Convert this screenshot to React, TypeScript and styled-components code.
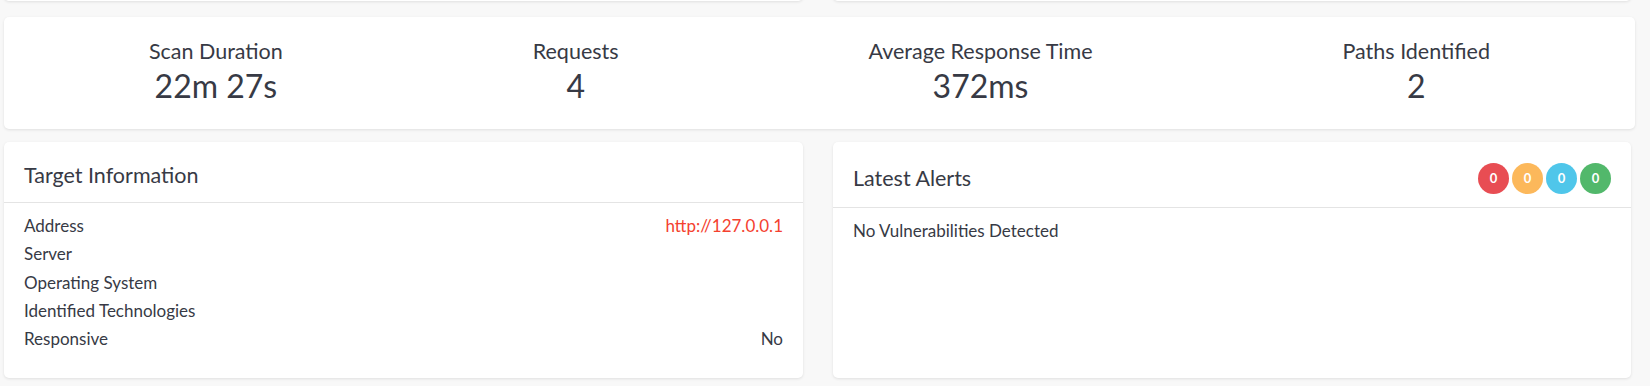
import styled, { createGlobalStyle } from 'styled-components';

const GlobalStyle = createGlobalStyle`
  html, body {
    margin: 0;
    padding: 0;
    background: #f8f8f8;
    font-family: Lato, 'Noto Sans', sans-serif;
    color: #373a45;
  }
`;

const Page = styled.div`
  display: flow-root;
  width: 1650px;
  padding: 0 15px 8px 4px;
  box-sizing: border-box;
`;

const Card = styled.div`
  background: #fff;
  border-radius: 5px;
  box-shadow: 0 1px 3px rgba(0, 0, 0, 0.1);
`;

const TwoColumns = styled.div`
  display: grid;
  grid-template-columns: 799px 798px;
  column-gap: 30px;
`;

const HiddenRow = styled(TwoColumns)`
  margin-top: -39px;
  height: 40px;
`;

const StatsCard = styled(Card)`
  margin-top: 16px;
  width: 1631px;
  height: 112px;
  box-sizing: border-box;
  padding: 22px 20px 0;
  display: flex;
  justify-content: space-around;
`;

const Stat = styled.div`
  display: flex;
  flex-direction: column;
  align-items: center;
`;

const StatLabel = styled.div`
  font-size: 21.5px;
  line-height: 25px;
`;

const StatValue = styled.div`
  margin-top: 3px;
  font-size: 32px;
  line-height: 38px;
`;

const PanelRow = styled(TwoColumns)`
  margin-top: 13px;
  height: 236px;
`;

const PanelHeader = styled.div<{ $tall?: boolean }>`
  display: flex;
  align-items: center;
  justify-content: space-between;
  padding: 21px 20px 14px;
  height: ${p => (p.$tall ? '30px' : '25px')};
  border-bottom: 1px solid #e4e4e4;
`;

const PanelTitle = styled.h3`
  margin: 0;
  font-size: 21.5px;
  font-weight: 400;
  line-height: 25px;
`;

const PanelBody = styled.div`
  padding: 9px 20px;
  font-size: 17px;
  line-height: 28.25px;
`;

const InfoRow = styled.div`
  display: flex;
  justify-content: space-between;
`;

const InfoValue = styled.span<{ $link?: boolean }>`
  color: ${p => (p.$link ? '#f4412f' : 'inherit')};
`;

const Badges = styled.div`
  display: flex;
  gap: 3px;
`;

const Badge = styled.span<{ $color: string }>`
  width: 31px;
  height: 31px;
  border-radius: 50%;
  background: ${p => p.$color};
  color: #fff;
  font-size: 13px;
  font-weight: 700;
  display: flex;
  align-items: center;
  justify-content: center;
`;

const stats = [
  { label: 'Scan Duration', value: '22m 27s' },
  { label: 'Requests', value: '4' },
  { label: 'Average Response Time', value: '372ms' },
  { label: 'Paths Identified', value: '2' },
];

const targetInfo: { label: string; value?: string; link?: boolean }[] = [
  { label: 'Address', value: 'http://127.0.0.1', link: true },
  { label: 'Server' },
  { label: 'Operating System' },
  { label: 'Identified Technologies' },
  { label: 'Responsive', value: 'No' },
];

const severities = ['#e84d53', '#fcb85b', '#4fc6ea', '#52b86b'];

export default function App() {
  return (
    <>
      <GlobalStyle />
      <Page>
        <HiddenRow>
          <Card />
          <Card />
        </HiddenRow>

        <StatsCard>
          {stats.map(s => (
            <Stat key={s.label}>
              <StatLabel>{s.label}</StatLabel>
              <StatValue>{s.value}</StatValue>
            </Stat>
          ))}
        </StatsCard>

        <PanelRow>
          <Card>
            <PanelHeader>
              <PanelTitle>Target Information</PanelTitle>
            </PanelHeader>
            <PanelBody>
              {targetInfo.map(row => (
                <InfoRow key={row.label}>
                  <span>{row.label}</span>
                  <InfoValue $link={row.link}>{row.value}</InfoValue>
                </InfoRow>
              ))}
            </PanelBody>
          </Card>

          <Card>
            <PanelHeader $tall>
              <PanelTitle>Latest Alerts</PanelTitle>
              <Badges>
                {severities.map(c => (
                  <Badge key={c} $color={c}>
                    0
                  </Badge>
                ))}
              </Badges>
            </PanelHeader>
            <PanelBody>No Vulnerabilities Detected</PanelBody>
          </Card>
        </PanelRow>
      </Page>
    </>
  );
}
